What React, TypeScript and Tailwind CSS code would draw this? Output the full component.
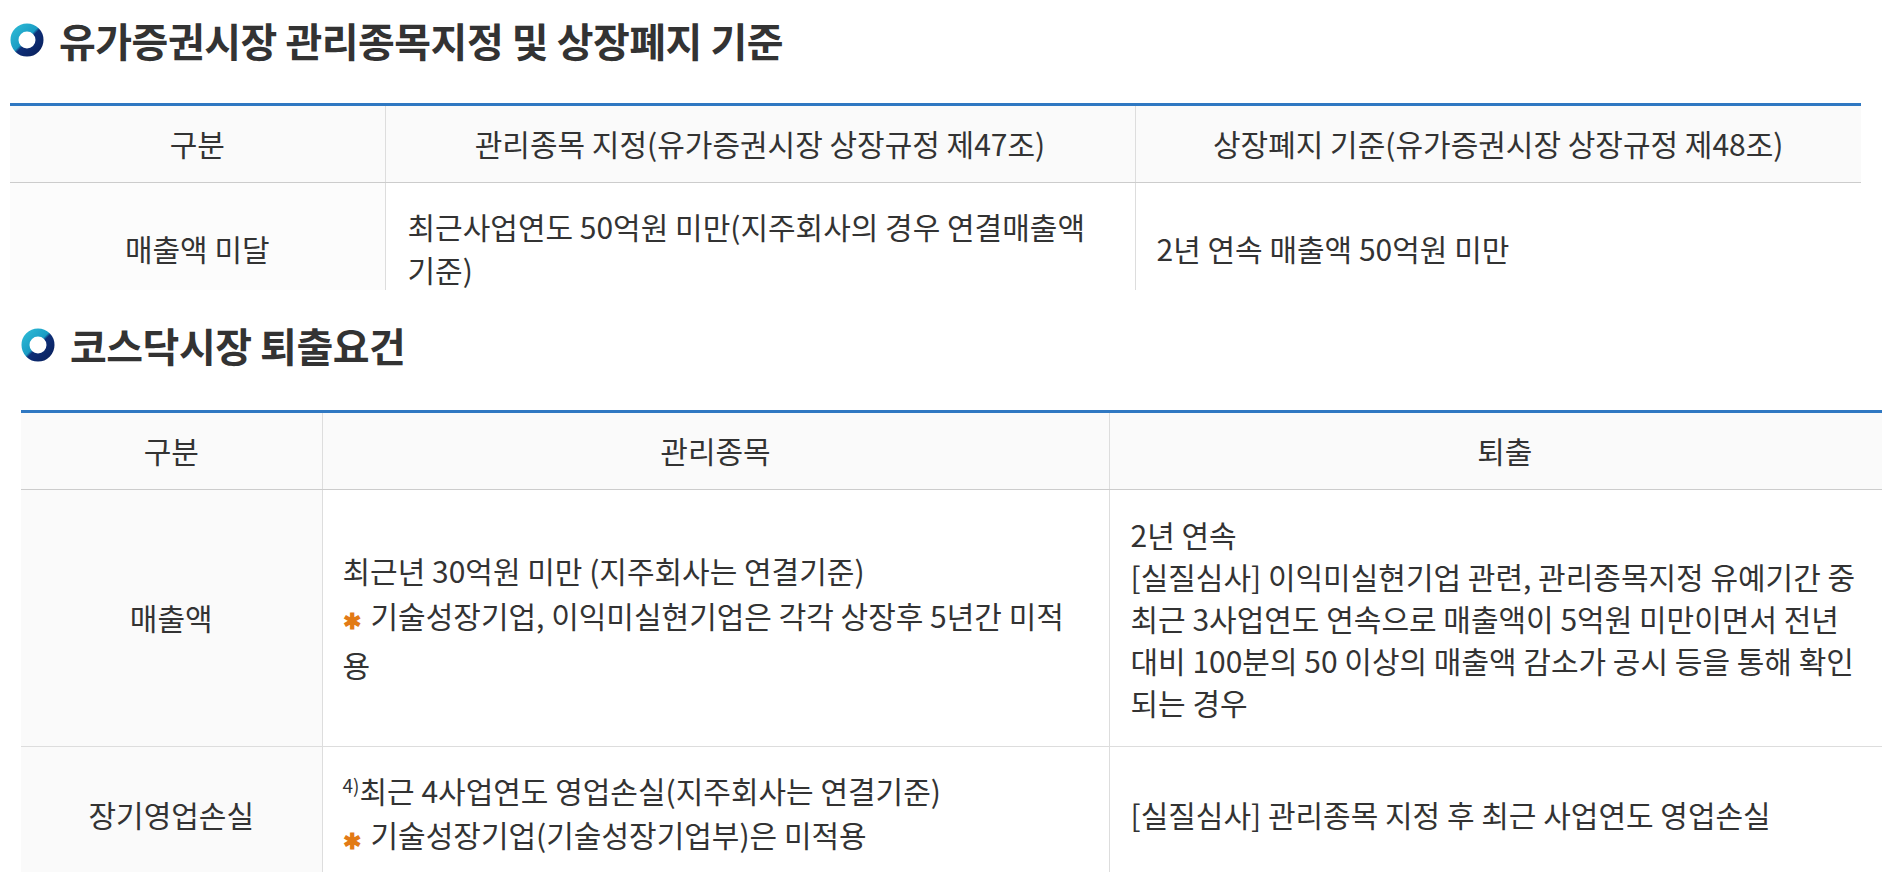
import React from "react";

const font = { fontFamily: '"Noto Sans CJK KR", "Noto Sans", sans-serif' };

function RingIcon() {
  return (
    <svg width="34" height="34" viewBox="0 0 34 34" className="shrink-0">
      <defs>
        <linearGradient id="ringg" x1="0" y1="0" x2="1" y2="1">
          <stop offset="0" stopColor="#2bb7d3" />
          <stop offset="0.46" stopColor="#1a9cc4" />
          <stop offset="0.54" stopColor="#0e2f78" />
          <stop offset="1" stopColor="#0a2260" />
        </linearGradient>
      </defs>
      <circle cx="17" cy="17" r="12.5" fill="none" stroke="url(#ringg)" strokeWidth="8" />
    </svg>
  );
}

function Title({ children }: { children: React.ReactNode }) {
  return (
    <div className="flex items-center h-[80px] gap-[15px]">
      <RingIcon />
      <h2 className="text-[40px] font-bold text-[#333] tracking-[-0.5px] leading-none">{children}</h2>
    </div>
  );
}

function Star() {
  return <span className="text-[#e27a16] font-bold text-[22px] align-middle mr-[10px]">✱</span>;
}

export default function App() {
  return (
    <div className="w-[1882px] h-[872px] overflow-hidden bg-white text-[#333]" style={font}>
      {/* Section 1 */}
      <div className="pl-[10px]">
        <Title>유가증권시장 관리종목지정 및 상장폐지 기준</Title>
      </div>
      <div className="ml-[10px] mt-[23px] w-[1851px] h-[187px] overflow-hidden border-t-[3px] border-[#2f78c2]">
        <table className="w-full table-fixed border-collapse text-[30px]">
          <colgroup>
            <col className="w-[375px]" />
            <col className="w-[750px]" />
            <col />
          </colgroup>
          <thead>
            <tr className="h-[76px] bg-[#fafafa]">
              <th className="font-normal border-b border-[#cccccc]">구분</th>
              <th className="font-normal border-b border-l border-[#cccccc] border-l-[#dddddd]">관리종목 지정(유가증권시장 상장규정 제47조)</th>
              <th className="font-normal border-b border-l border-[#cccccc] border-l-[#dddddd]">상장폐지 기준(유가증권시장 상장규정 제48조)</th>
            </tr>
          </thead>
          <tbody>
            <tr className="h-[132px]">
              <th className="font-normal bg-[#fcfcfc]">매출액 미달</th>
              <td className="border-l border-[#dddddd] px-[22px] leading-[43px] whitespace-nowrap">
                최근사업연도 50억원 미만(지주회사의 경우 연결매출액
                <br />
                기준)
              </td>
              <td className="border-l border-[#dddddd] px-[21px] leading-[43px] whitespace-nowrap">2년 연속 매출액 50억원 미만</td>
            </tr>
          </tbody>
        </table>
      </div>

      {/* Section 2 */}
      <div className="pl-[21px] mt-[15px]">
        <Title>코스닥시장 퇴출요건</Title>
      </div>
      <div className="ml-[21px] mt-[25px] w-[1879px] border-t-[3px] border-[#2f78c2]">
        <table className="w-full table-fixed border-collapse text-[30px]">
          <colgroup>
            <col className="w-[301px]" />
            <col className="w-[787px]" />
            <col />
          </colgroup>
          <thead>
            <tr className="h-[76px] bg-[#fafafa]">
              <th className="font-normal border-b border-[#cccccc]">구분</th>
              <th className="font-normal border-b border-l border-[#cccccc] border-l-[#dddddd]">관리종목</th>
              <th className="font-normal border-b border-l border-[#cccccc] border-l-[#dddddd]">퇴출</th>
            </tr>
          </thead>
          <tbody>
            <tr className="h-[257px] border-b border-[#dddddd]">
              <th className="font-normal bg-[#fafafa]">매출액</th>
              <td className="border-l border-[#dddddd] px-[20px] leading-[45px] whitespace-nowrap">
                최근년 30억원 미만 (지주회사는 연결기준)
                <br />
                <Star />기술성장기업, 이익미실현기업은 각각 상장후 5년간 미적
                <br />
                용
              </td>
              <td className="border-l border-[#dddddd] px-[21px] leading-[42px] whitespace-nowrap">
                2년 연속
                <br />
                [실질심사] 이익미실현기업 관련, 관리종목지정 유예기간 중
                <br />
                최근 3사업연도 연속으로 매출액이 5억원 미만이면서 전년
                <br />
                대비 100분의 50 이상의 매출액 감소가 공시 등을 통해 확인
                <br />
                되는 경우
              </td>
            </tr>
            <tr className="h-[136px]">
              <th className="font-normal bg-[#fafafa]">장기영업손실</th>
              <td className="border-l border-[#dddddd] px-[20px] leading-[44px] whitespace-nowrap">
                <sup className="text-[19px]">4)</sup>최근 4사업연도 영업손실(지주회사는 연결기준)
                <br />
                <Star />기술성장기업(기술성장기업부)은 미적용
              </td>
              <td className="border-l border-[#dddddd] px-[21px] leading-[44px] whitespace-nowrap">
                [실질심사] 관리종목 지정 후 최근 사업연도 영업손실
              </td>
            </tr>
          </tbody>
        </table>
      </div>
    </div>
  );
}
